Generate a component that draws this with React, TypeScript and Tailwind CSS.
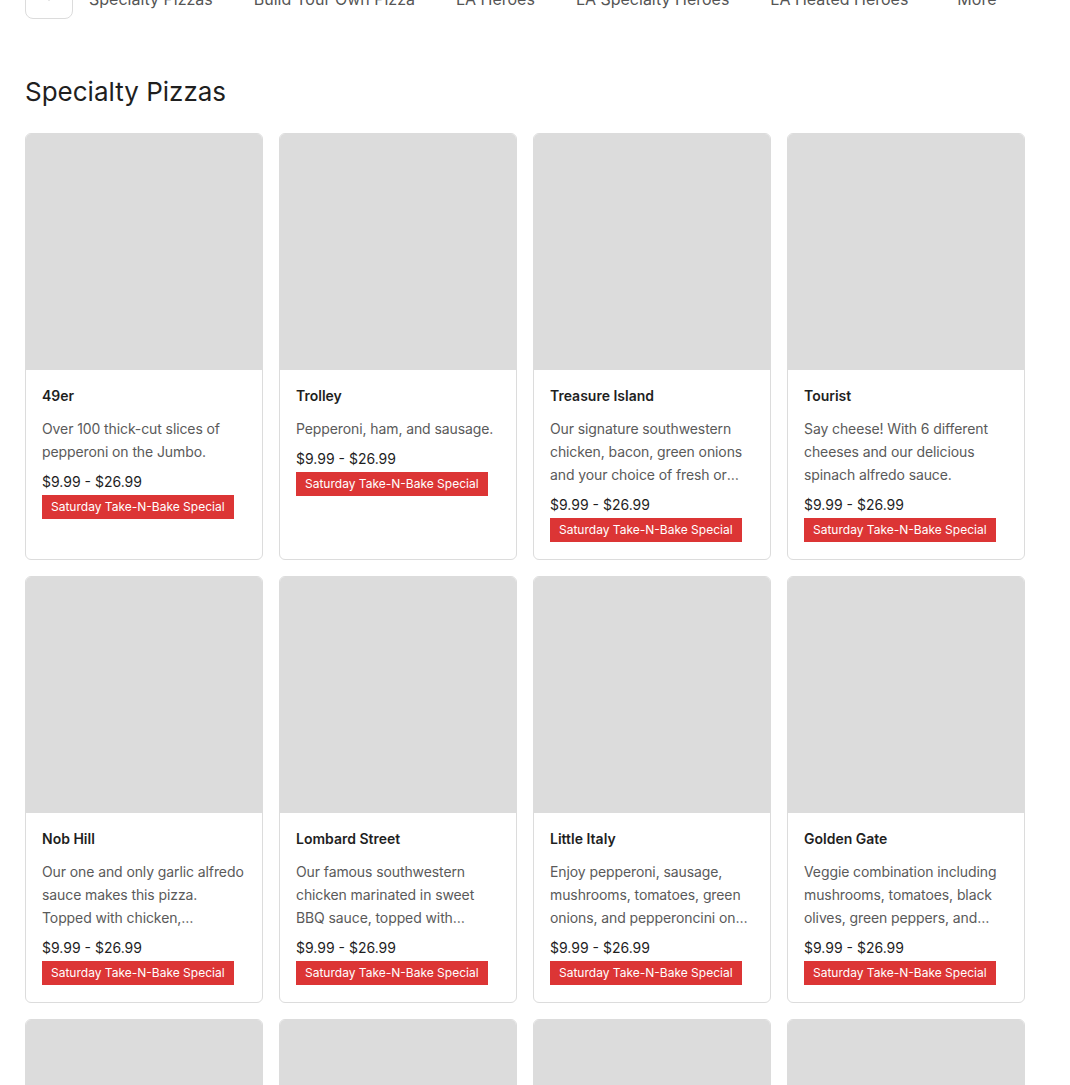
import React from "react";
import { Plus } from "lucide-react";

type Pizza = {
  name: string;
  description: string;
};

const pizzas: Pizza[] = [
  { name: "49er", description: "Over 100 thick-cut slices of pepperoni on the Jumbo." },
  { name: "Trolley", description: "Pepperoni, ham, and sausage." },
  {
    name: "Treasure Island",
    description:
      "Our signature southwestern chicken, bacon, green onions and your choice of fresh or roasted garlic.",
  },
  {
    name: "Tourist",
    description: "Say cheese! With 6 different cheeses and our delicious spinach alfredo sauce.",
  },
  {
    name: "Nob Hill",
    description:
      "Our one and only garlic alfredo sauce makes this pizza. Topped with chicken, mushrooms and tomatoes.",
  },
  {
    name: "Lombard Street",
    description:
      "Our famous southwestern chicken marinated in sweet BBQ sauce, topped with pineapple and cilantro.",
  },
  {
    name: "Little Italy",
    description:
      "Enjoy pepperoni, sausage, mushrooms, tomatoes, green onions, and pepperoncini on our garlic sauce.",
  },
  {
    name: "Golden Gate",
    description:
      "Veggie combination including mushrooms, tomatoes, black olives, green peppers, and onions.",
  },
  { name: "Chinatown", description: "Chicken, pineapple and green onions." },
  { name: "Fisherman's Wharf", description: "Shrimp, garlic and tomatoes." },
  { name: "Haight Ashbury", description: "Pesto, tomatoes and feta." },
  { name: "Cable Car", description: "Ham and pineapple." },
];

const navItems = [
  "Specialty Pizzas",
  "Build Your Own Pizza",
  "LA Heroes",
  "LA Specialty Heroes",
  "LA Heated Heroes",
];

function PizzaCard({ name, description }: Pizza) {
  return (
    <div className="flex flex-col overflow-hidden rounded-md border border-[#dcdcdc] bg-white">
      <div className="h-[236px] w-full bg-[#dcdcdc]" />
      <div className="flex flex-col px-4 pt-4 pb-[17px]">
        <h3 className="text-sm leading-5 font-semibold text-[#1f1f1f]">{name}</h3>
        <p className="mt-[11px] line-clamp-3 text-sm leading-[23px] tracking-[-0.1px] text-[#5a5a5a]">
          {description}
        </p>
        <p className="mt-[9px] text-sm leading-5 text-[#1f1f1f]">$9.99 - $26.99</p>
        <div className="mt-[1px]">
          <span className="inline-block bg-[#dc3535] px-[9px] text-xs leading-6 text-white">
            Saturday Take-N-Bake Special
          </span>
        </div>
      </div>
    </div>
  );
}

export default function App() {
  return (
    <div
      className="min-h-screen bg-white pl-[25px]"
      style={{ fontFamily: "Inter, 'Noto Sans', sans-serif" }}
    >
      <nav className="-mt-[29px] flex items-center gap-4">
        <button className="flex h-12 w-12 items-center justify-center rounded-lg border border-[#dcdcdc] text-[#444]">
          <Plus size={16} strokeWidth={2} />
        </button>
        <div className="flex items-center gap-[41px] pt-[7px] text-base text-[#555]">
          {navItems.map((item) => (
            <span key={item}>{item}</span>
          ))}
          <span className="ml-[8px]">More</span>
        </div>
      </nav>

      <h2 className="mt-[55px] text-[26px] leading-9 text-[#1f1f1f]">Specialty Pizzas</h2>

      <div className="mt-[23px] grid grid-cols-[repeat(4,238px)] gap-4 pb-10">
        {pizzas.map((p) => (
          <PizzaCard key={p.name} {...p} />
        ))}
      </div>
    </div>
  );
}
